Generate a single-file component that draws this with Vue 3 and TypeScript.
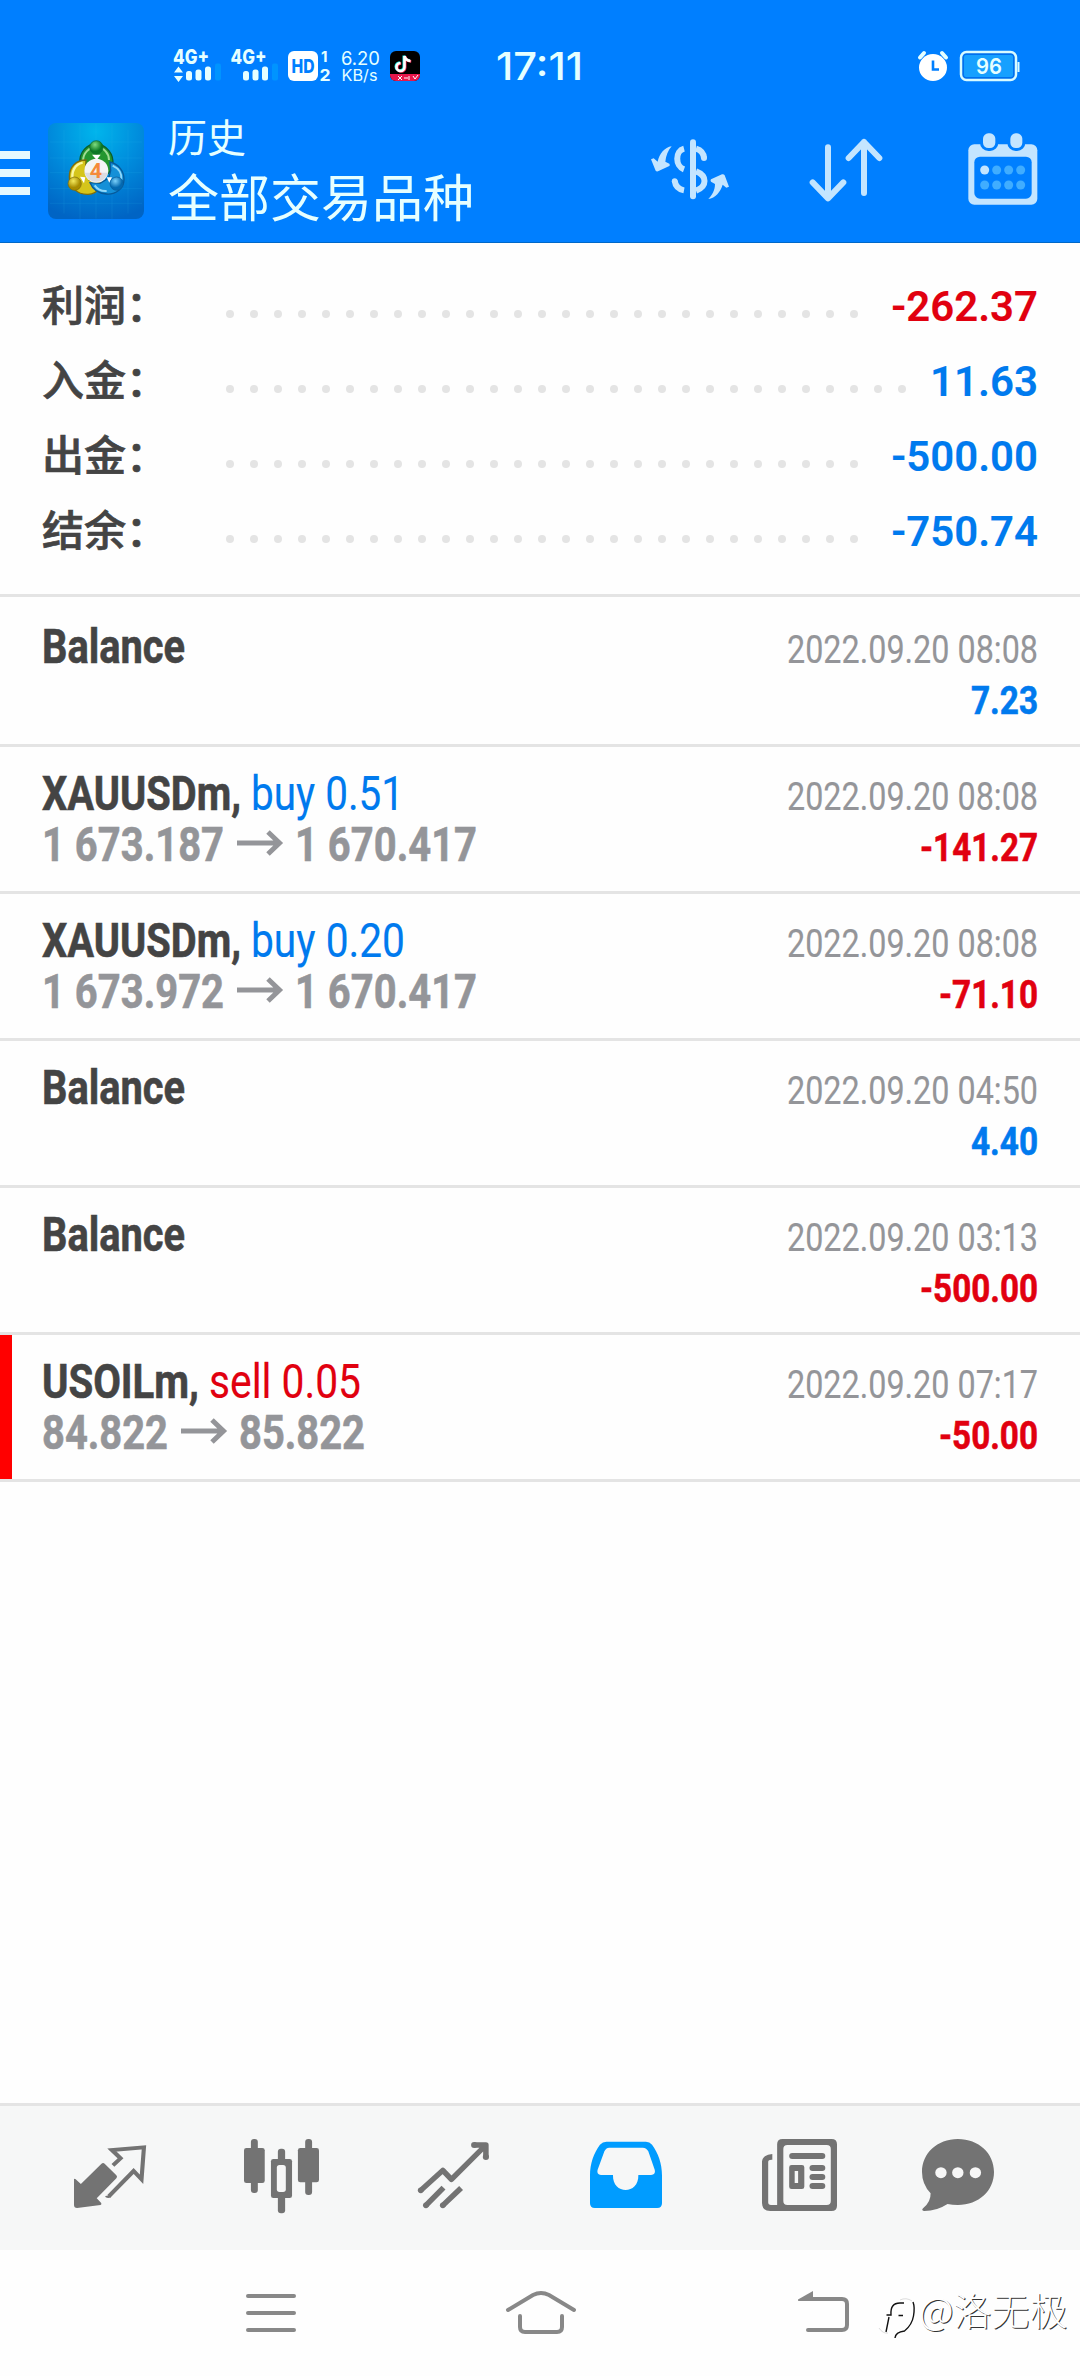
<script setup lang="ts">
import { h } from 'vue'

interface LabelProps {
  text: string
  w: number
  size: number
  weight: number
  color: string
}

/* One line of text condensed to a fixed advance width. The box is as tall as the font size, baseline at its bottom. */
const Label = (p: LabelProps) =>
  h('svg', { width: p.w, height: p.size, style: 'display:block;overflow:visible;flex:none' }, [
    h(
      'text',
      {
        x: 0,
        y: p.size,
        'font-size': p.size,
        'font-weight': p.weight,
        fill: p.color,
        stroke: p.color,
        'stroke-width': p.weight === 700 ? 0.6 : 0.15,
        'font-family': 'Roboto, sans-serif',
        textLength: p.w,
        lengthAdjust: 'spacingAndGlyphs',
      },
      p.text,
    ),
  ])
Label.props = ['text', 'w', 'size', 'weight', 'color']

const BLUE = '#007aee'
const RED = '#e1000f'
const DARK = '#444444'
const GREY = '#949599'

interface Total { name: string; value: string; w: number; dots: number; color: string }
const totals: Total[] = [
  { name: '利润：', value: '-262.37', w: 147, dots: 27, color: RED },
  { name: '入金：', value: '11.63', w: 108, dots: 29, color: BLUE },
  { name: '出金：', value: '-500.00', w: 147, dots: 27, color: BLUE },
  { name: '结余：', value: '-750.74', w: 147, dots: 27, color: BLUE },
]

interface Fitted { text: string; w: number }
interface Deal {
  name: Fitted
  action?: Fitted & { color: string }
  open?: Fitted
  close?: Fitted
  time: string
  profit: Fitted & { color: string }
  marked?: boolean
}
const deals: Deal[] = [
  { name: { text: 'Balance', w: 143 }, time: '2022.09.20 08:08', profit: { text: '7.23', w: 67, color: BLUE } },
  {
    name: { text: 'XAUUSDm,', w: 199 }, action: { text: 'buy 0.51', w: 153, color: BLUE },
    open: { text: '1 673.187', w: 182 }, close: { text: '1 670.417', w: 182 },
    time: '2022.09.20 08:08', profit: { text: '-141.27', w: 118, color: RED },
  },
  {
    name: { text: 'XAUUSDm,', w: 199 }, action: { text: 'buy 0.20', w: 154, color: BLUE },
    open: { text: '1 673.972', w: 182 }, close: { text: '1 670.417', w: 182 },
    time: '2022.09.20 08:08', profit: { text: '-71.10', w: 99, color: RED },
  },
  { name: { text: 'Balance', w: 143 }, time: '2022.09.20 04:50', profit: { text: '4.40', w: 67, color: BLUE } },
  { name: { text: 'Balance', w: 143 }, time: '2022.09.20 03:13', profit: { text: '-500.00', w: 118, color: RED } },
  {
    name: { text: 'USOILm,', w: 157 }, action: { text: 'sell 0.05', w: 152, color: RED },
    open: { text: '84.822', w: 126 }, close: { text: '85.822', w: 126 },
    time: '2022.09.20 07:17', profit: { text: '-50.00', w: 99, color: RED }, marked: true,
  },
]
</script>

<template>
  <div class="screen">
    <header class="top">
      <div class="status">
        <svg class="signals" width="260" height="40" viewBox="170 46 260 40" fill="#e6ffff" font-family="Inter, sans-serif">
          <g font-size="20" font-weight="800">
            <text x="173" y="64" textLength="36" lengthAdjust="spacingAndGlyphs">4G+</text>
            <text x="230.500" y="64" textLength="36" lengthAdjust="spacingAndGlyphs">4G+</text>
          </g>
          <path d="M178.500 66.500l4.500 6h-9zM178.500 82l-4.500-6h9z" />
          <g>
            <rect x="186" y="71" width="6" height="9.500" rx="2.500" /><rect x="195.500" y="69.500" width="6" height="11" rx="2.500" />
            <rect x="205" y="66.500" width="6" height="14" rx="2.500" /><rect x="215" y="63.500" width="6" height="17" rx="2" fill="#0094ff" />
            <rect x="243" y="71" width="6" height="9.500" rx="2.500" /><rect x="252.500" y="69.500" width="6" height="11" rx="2.500" />
            <rect x="262" y="66.500" width="6" height="14" rx="2.500" /><rect x="272" y="63.500" width="6" height="17" rx="2" fill="#0094ff" />
          </g>
          <rect x="288" y="51" width="30" height="30" rx="6" fill="#fff" />
          <text x="291.500" y="73" font-size="19" font-weight="800" fill="#007fff" textLength="23" lengthAdjust="spacingAndGlyphs">HD</text>
          <text x="321" y="62" font-size="15" font-weight="700">1</text>
          <text x="319.500" y="80.500" font-size="16" font-weight="700" textLength="11" lengthAdjust="spacingAndGlyphs">2</text>
          <text x="341" y="65" font-size="19" textLength="39" lengthAdjust="spacingAndGlyphs">6.20</text>
          <text x="341.500" y="80.500" font-size="15.500" textLength="36" lengthAdjust="spacingAndGlyphs">KB/s</text>
          <rect x="390" y="51" width="30" height="30" rx="6" fill="#000" />
          <path d="M390 74h30v1a6 6 0 0 1-6 6h-18a6 6 0 0 1-6-6z" fill="#e8174b" />
          <g fill="none" stroke-width="2.600">
            <path d="M404.500 56v11a4 4 0 1 1-4-4M404.500 56q1 4.500 6 5" stroke="#25f4ee" transform="translate(-.7 -.5)" />
            <path d="M404.500 56v11a4 4 0 1 1-4-4M404.500 56q1 4.500 6 5" stroke="#fe2c55" transform="translate(.7 .5)" />
            <path d="M404.500 56v11a4 4 0 1 1-4-4M404.500 56q1 4.500 6 5" stroke="#fff" />
          </g>
          <path d="M398 76l4 4M402 76l-4 4M404 78h4M409 76v4M413 76l2 3 3-4" stroke="#fff" stroke-width="1" fill="none" />
        </svg>
        <svg class="clock" width="90" height="40" viewBox="494 46 90 40">
          <text x="496" y="80" font-size="38" font-weight="500" font-family="Inter, sans-serif" fill="#e6ffff" textLength="87" lengthAdjust="spacingAndGlyphs">17:11</text>
        </svg>
        <svg class="power" width="106" height="40" viewBox="916 46 106 40">
          <ellipse cx="933" cy="67.500" rx="14" ry="13.500" fill="#fff" />
          <path d="M920 57.500l4-4.500M946 57.500l-4-4.500" stroke="#e6ffff" stroke-width="4" stroke-linecap="round" />
          <path d="M933 60.500v9h6" stroke="#007fff" stroke-width="2.600" fill="none" />
          <rect x="961" y="52" width="55" height="28" rx="5.500" fill="#0070ee" stroke="#d8fbff" stroke-width="2.500" />
          <rect x="964" y="55" width="49" height="22" rx="2" fill="#16a0ff" />
          <path d="M1018.500 62v10" stroke="#d8fbff" stroke-width="2" />
          <text x="976" y="74" font-size="22" font-weight="600" font-family="Inter, sans-serif" fill="#e6ffff" textLength="26" lengthAdjust="spacingAndGlyphs">96</text>
        </svg>
      </div>

      <div class="toolbar">
        <div class="burger"><i /><i /><i /></div>
        <svg class="logo" width="96" height="96" viewBox="144 69 288 288">
          <defs>
            <radialGradient id="sky" gradientUnits="userSpaceOnUse" cx="288" cy="95" r="270">
              <stop offset="0" stop-color="#00b5ec" /><stop offset=".5" stop-color="#008bdc" /><stop offset="1" stop-color="#0064c4" />
            </radialGradient>
            <radialGradient id="gr" cx=".4" cy=".3"><stop offset="0" stop-color="#7fdc80" /><stop offset="1" stop-color="#0b7a24" /></radialGradient>
            <radialGradient id="ye" cx=".4" cy=".3"><stop offset="0" stop-color="#f4ea5c" /><stop offset="1" stop-color="#a88c00" /></radialGradient>
            <radialGradient id="bl" cx=".4" cy=".3"><stop offset="0" stop-color="#7ad0fa" /><stop offset="1" stop-color="#0469b0" /></radialGradient>
          </defs>
          <rect x="144" y="69" width="288" height="288" rx="24" fill="url(#sky)" />
          <path d="M192 90v250M240 75v282M288 70v286M336 75v282M384 90v250M150 126h276M150 174h276M150 218h276M150 266h276M150 310h276" stroke="#30c4f0" stroke-opacity=".2" stroke-width="2" />
          <path d="M240 190C236 158 262 130 289 132c30 2 54 30 49 62-2 14-8 22-16 28l-14-36h-32l-14 14z" fill="#23962f" stroke="#0c5f2c" stroke-width="4" />
          <path d="M249 184c0-26 18-42 40-42 24 0 38 20 38 38" fill="none" stroke="#9fdc93" stroke-width="6" />
          <path d="M258 180c-30 0-50 22-50 50 0 32 24 54 56 53 18 0 28-8 36-20l8-16-40-6-12-24z" fill="#d5c51b" stroke="#806d0b" stroke-width="4" />
          <path d="M248 188c-24 5-34 28-30 50" fill="none" stroke="#fbf7a0" stroke-width="7" />
          <path d="M330 186c26 6 42 28 42 52 0 26-24 46-52 44-26-2-42-14-50-34l30 2 26-16 6-22z" fill="#1590d8" stroke="#075a9a" stroke-width="4" />
          <path d="M338 197c20 9 28 26 26 42M284 256c8 12 22 18 36 17" fill="none" stroke="#8fd8fa" stroke-width="6" />
          <path d="M276 164h26l-12 16zM240 230l16 2-4 18zM320 232l16 0-8 16z" fill="#fff" />
          <circle cx="289" cy="142" r="20" fill="url(#gr)" stroke="#0d6628" stroke-width="2" />
          <circle cx="224" cy="251" r="20" fill="url(#ye)" stroke="#7c690a" stroke-width="2" />
          <circle cx="350" cy="251" r="20" fill="url(#bl)" stroke="#075a9a" stroke-width="2" />
          <circle cx="289" cy="212" r="36" fill="#f4f4f5" />
          <path d="M254 218a36 36 0 0 0 70 0z" fill="#dcdce0" />
          <text x="269" y="233" font-size="60" font-weight="700" font-family="Roboto, sans-serif" fill="#f58a3a" textLength="37" lengthAdjust="spacingAndGlyphs">4</text>
        </svg>
        <div class="titles">
          <div class="sub">历史</div>
          <div class="main">全部交易品种</div>
        </div>
        <svg class="t-currency" width="80" height="65" viewBox="90 80 240 195" fill="#c4e5ff">
          <g fill="none" stroke="#c4e5ff" stroke-width="18">
            <path d="M219 96v162" stroke-linecap="round" />
            <path d="M192 115C165 122 165 167 192 177M228 183C262 196 262 228 228 241" />
            <path d="M164 211C166 227 176 237 192 240" /><path d="M228 115C241 119 251 129 252 143" />
          </g>
          <circle cx="164" cy="212" r="8.500" /><circle cx="252" cy="143" r="9" />
          <path d="M155 108C134 111 118 130 113 154L101 144 93 147 107 181Q109 184 114 183L148 167Q151 164 148 160L136 154C138 137 144 120 155 108z" />
          <path d="M265 266C286 263 302 244 308 223L319 232 327 229 314 195Q312 191 306 192L273 207Q270 210 273 214L285 221C285 240 276 255 265 266z" />
        </svg>
        <svg class="t-sort" width="74" height="64" viewBox="567 85 222 192" fill="none" stroke="#c4e5ff" stroke-width="18" stroke-linecap="round" stroke-linejoin="round">
          <path d="M624 113V266M578 218L624 266 670 218M732 250V97M686 145L732 97 778 145" />
        </svg>
        <svg class="t-cal" width="70" height="72" viewBox="1043 70 210 216" fill="#c4e5ff">
          <rect x="1044" y="104" width="207" height="181" rx="18" />
          <rect x="1062" y="141" width="172" height="126" rx="17" fill="#007fff" />
          <g stroke="#007fff" stroke-width="18" paint-order="stroke">
            <rect x="1088" y="71" width="37" height="44" rx="16" /><rect x="1170" y="71" width="36" height="44" rx="16" />
          </g>
          <circle cx="1093" cy="181" r="13.500" />
          <g fill="#40adff">
            <circle cx="1129" cy="181" r="13.500" /><circle cx="1165" cy="181" r="13.500" /><circle cx="1201" cy="181" r="13.500" />
            <circle cx="1093" cy="226" r="13.500" /><circle cx="1129" cy="226" r="13.500" /><circle cx="1165" cy="226" r="13.500" /><circle cx="1201" cy="226" r="13.500" />
          </g>
        </svg>
      </div>
    </header>

    <section class="totals">
      <div v-for="t in totals" :key="t.name" class="total">
        <span class="total-name">{{ t.name }}</span>
        <svg class="dots" :width="t.dots * 24" height="10">
          <line x1="5" y1="5" :x2="t.dots * 24 - 18" y2="5" stroke="#e4e4e4" stroke-width="8" stroke-linecap="round" stroke-dasharray="0 24" />
        </svg>
        <Label class="total-value" :text="t.value" :w="t.w" :size="42" :weight="650" :color="t.color" />
      </div>
    </section>

    <ul class="deals">
      <li v-for="(d, i) in deals" :key="i" class="deal" :class="{ marked: d.marked }">
        <div class="left">
          <div class="line">
            <Label :text="d.name.text" :w="d.name.w" :size="48" :weight="700" :color="DARK" />
            <Label v-if="d.action" class="action" :text="d.action.text" :w="d.action.w" :size="48" :weight="400" :color="d.action.color" />
          </div>
          <div v-if="d.open && d.close" class="line prices">
            <Label :text="d.open.text" :w="d.open.w" :size="48" :weight="700" :color="GREY" />
            <svg class="arrow" width="47" height="26" viewBox="0 0 47 26" fill="none" stroke="#949599" stroke-width="5">
              <path d="M0 13H41M31 2L42.500 13 31 24" />
            </svg>
            <Label :text="d.close.text" :w="d.close.w" :size="48" :weight="700" :color="GREY" />
          </div>
        </div>
        <div class="right">
          <Label :text="d.time" :w="251" :size="39" :weight="400" :color="GREY" />
          <Label class="profit" :text="d.profit.text" :w="d.profit.w" :size="39" :weight="700" :color="d.profit.color" />
        </div>
      </li>
    </ul>

    <nav class="tabs">
      <svg width="72" viewBox="215 48 209 432" preserveAspectRatio="none" fill="#737373">
        <path d="M215 268Q216 265 219 267L235 282 294 222Q299 217 304 221L338 256Q342 260 338 265L281 325 294 339Q296 344 292 345L224 354Q215 354 215 345z" />
        <path d="M328 226L350 205 325 180 418 172 411 268 388 243 316 319" fill="none" stroke="#737373" stroke-width="12" />
        <path d="M306 318l14-2 2 6q-8 4-16-1z" />
      </svg>
      <svg width="75" viewBox="709 48 217 432" preserveAspectRatio="none" fill="#737373">
        <rect x="729" y="147" width="20" height="162" rx="9" /><rect x="709" y="174" width="60" height="105" rx="7" />
        <rect x="886" y="147" width="20" height="168" rx="9" /><rect x="865" y="174" width="61" height="103" rx="7" />
        <rect x="807" y="176" width="21" height="194" rx="9" /><rect x="787" y="207" width="61" height="117" rx="7" />
        <rect x="804" y="225" width="26" height="81" rx="8" fill="#f7f7f7" />
      </svg>
      <svg width="71" viewBox="1214 48 206 432" preserveAspectRatio="none" fill="none" stroke="#737373" stroke-width="16" stroke-linejoin="round">
        <path d="M1222 301L1286 241 1311 268 1411 165M1377 165H1411V201M1237 346L1288 293M1286 346L1339 294" />
        <g fill="#737373" stroke="none">
          <circle cx="1222" cy="301" r="8.500" /><circle cx="1237" cy="346" r="8.500" /><circle cx="1286" cy="346" r="8.500" />
          <circle cx="1377" cy="165" r="9" /><circle cx="1411" cy="201" r="9" />
        </g>
      </svg>
      <svg width="72" viewBox="146 48 210 432" preserveAspectRatio="none" fill="#009cff">
        <path fill-rule="evenodd" d="M194 155H309Q320 155 327 164C345 190 356 220 356 256V340Q356 354 342 354H160Q146 354 146 340V256C146 220 157 190 175 164Q183 155 194 155zM202 173Q192 174 188 184L168 240Q165 254 178 255H213C211 315 289 315 287 255H324Q338 254 335 240L316 184Q311 174 300 173z" />
      </svg>
      <svg width="75" viewBox="646 48 218 432" preserveAspectRatio="none" fill="#737373">
        <path fill-rule="evenodd" d="M706 147H848Q864 147 864 163V347Q864 363 848 363H670Q646 363 646 339V214Q648 194 676 192V209Q664 208 664 216V337Q664 345 672 345H690V163Q690 147 706 147zM720 165Q708 165 708 177V333Q708 345 720 345H834Q846 345 846 333V177Q846 165 834 165z" />
        <rect x="725" y="189" width="105" height="18" rx="9" />
        <path fill-rule="evenodd" d="M732 225H762Q769 225 769 232V290Q769 297 762 297H732Q725 297 725 290V232Q725 225 732 225zM741 243V279H751V243z" />
        <rect x="784" y="225" width="46" height="18" rx="9" /><rect x="784" y="252" width="46" height="18" rx="9" /><rect x="784" y="279" width="46" height="18" rx="9" />
      </svg>
      <svg width="72" viewBox="1109 48 209 432" preserveAspectRatio="none" fill="#737373">
        <path d="M1213 147C1274 147 1318 190 1318 246S1274 345 1213 345Q1197 345 1183 342Q1152 363 1116 363Q1106 362 1112 355Q1135 336 1134 310Q1109 283 1109 246C1109 190 1153 147 1213 147z" />
        <g fill="#f7f7f7"><circle cx="1164" cy="248" r="16.500" /><circle cx="1213" cy="248" r="16.500" /><circle cx="1264" cy="248" r="16.500" /></g>
      </svg>
    </nav>

    <footer class="system">
      <svg width="50" height="40" viewBox="246 2292 50 40" stroke="#888" stroke-width="4" stroke-linecap="round">
        <path d="M248 2296h46M248 2313h46M248 2330h46" />
      </svg>
      <svg width="72" height="46" viewBox="505 2289 72 46" fill="none" stroke="#888" stroke-width="4" stroke-linecap="round">
        <path d="M508 2310L533 2295Q541 2291 549 2295L574 2310M520 2316V2327Q520 2332 525 2332H557Q562 2332 562 2327V2316" />
      </svg>
      <svg width="52" height="44" viewBox="797 2290 52 44" fill="none" stroke="#888" stroke-width="4" stroke-linecap="round">
        <path d="M808 2330H842Q847 2330 847 2325V2304Q847 2299 842 2299H812" />
        <path d="M798 2299.500L813 2291V2301H799Q797.500 2301 798 2299.500z" fill="#888" stroke="none" />
      </svg>
      <div class="credit">
        <svg width="42" height="46" viewBox="877 2294 42 46" fill="none">
          <path d="M886 2332l3-15M886.500 2315h4.500q-1-12 9-12h4M898.500 2315.500h4.500M913 2302q2 5 .5 14t-9 15q-9 1-9.500 7" stroke="#111" stroke-width="1.400" />
          <path d="M879 2328q4 6 9 5M912 2301q-6-4-12-1" stroke="#ddd" stroke-width="1" />
        </svg>
        <span>@洛无极</span>
      </div>
    </footer>
  </div>
</template>

<style>
body {
  background: #fff;
}
</style>

<style scoped>
.screen {
  position: relative;
  display: flex;
  flex-direction: column;
  width: 1080px;
  height: 2376px;
  overflow: hidden;
  background: #fefefe;
  font-family: Roboto, 'Noto Sans CJK SC', sans-serif;
}
svg {
  display: block;
  flex: none;
  overflow: visible;
}
.top {
  box-sizing: border-box;
  height: 243px;
  background: #007fff;
  border-bottom: 1px solid #0068c8;
}
.status {
  display: flex;
  height: 54px;
  padding: 46px 0 0 170px;
}
.clock {
  margin-left: 64px;
}
.power {
  margin-left: 332px;
}
.toolbar {
  display: flex;
  align-items: flex-start;
  height: 142px;
}
.burger {
  display: flex;
  flex-direction: column;
  gap: 10px;
  width: 30px;
  margin-top: 51px;
}
.burger i {
  height: 8px;
  background: #e6f9ff;
}
.logo {
  margin: 23px 0 0 18px;
}
.titles {
  width: 480px;
  margin-left: 24px;
  color: #e6ffff;
  font-family: 'Noto Sans CJK SC', sans-serif;
  white-space: nowrap;
}
.sub {
  margin-top: 6px;
  font-size: 39px;
  line-height: 58px;
}
.main {
  margin-top: -7px;
  font-size: 51px;
  line-height: 76px;
}
.t-currency {
  margin: 37px 0 0 2px;
}
.t-sort {
  margin: 38px 0 0 79px;
}
.t-cal {
  margin: 33px 0 0 85px;
}
.totals {
  height: 324px;
  padding: 22px 42px 5px;
}
.total {
  display: flex;
  align-items: center;
  height: 75px;
}
.total-name {
  width: 183px;
  color: #444;
  font: 500 42px/62px 'Noto Sans CJK SC', sans-serif;
  -webkit-text-stroke: 0.700px #444;
}
.dots {
  margin-top: 23px;
}
.total-value {
  margin-left: auto;
  margin-top: -6px;
}
.deals {
  flex: 1;
  margin: 0;
  padding: 0;
  list-style: none;
  border-top: 3px solid #e4e4e4;
}
.totals {
  box-sizing: border-box;
  height: 351px;
}
.deal {
  box-sizing: border-box;
  display: flex;
  justify-content: space-between;
  height: 147px;
  padding: 15px 42px 0;
  border-bottom: 3px solid #e4e4e4;
}
.deal:first-child {
  height: 150px;
  padding-top: 18px;
}
.marked {
  background: linear-gradient(#f00, #f00) no-repeat 0 0 / 12px 100%;
}
.line {
  display: flex;
}
.action {
  margin-left: 10px;
}
.prices {
  margin-top: 3px;
}
.arrow {
  margin: 17px 11px 0 13px;
}
.right {
  display: flex;
  flex-direction: column;
  align-items: flex-end;
  padding-top: 9px;
}
.profit {
  margin-top: 12px;
}
.tabs {
  box-sizing: border-box;
  display: flex;
  height: 147px;
  padding: 0 86px 0 74px;
  border-top: 3px solid #e4e4e4;
  background: #f6f7f7;
}
.tabs svg {
  height: 144px;
}
.tabs svg:nth-child(2) {
  margin-left: 98px;
}
.tabs svg:nth-child(3) {
  margin-left: 99px;
}
.tabs svg:nth-child(4) {
  margin-left: 101px;
}
.tabs svg:nth-child(5) {
  margin-left: 100px;
}
.tabs svg:nth-child(6) {
  margin-left: 85px;
}
.system {
  display: flex;
  height: 126px;
  padding-left: 246px;
}
.system > svg:nth-child(1) {
  margin-top: 42px;
}
.system > svg:nth-child(2) {
  margin: 39px 0 0 209px;
}
.system > svg:nth-child(3) {
  margin: 40px 0 0 220px;
}
.credit {
  position: absolute;
  left: 877px;
  top: 2281px;
  display: flex;
  color: #fff;
  font: 300 38px/55px 'Noto Sans CJK SC', sans-serif;
  text-shadow: 1px 1px 0 #333;
  white-space: nowrap;
}
.credit svg {
  margin-top: 13px;
}
</style>
